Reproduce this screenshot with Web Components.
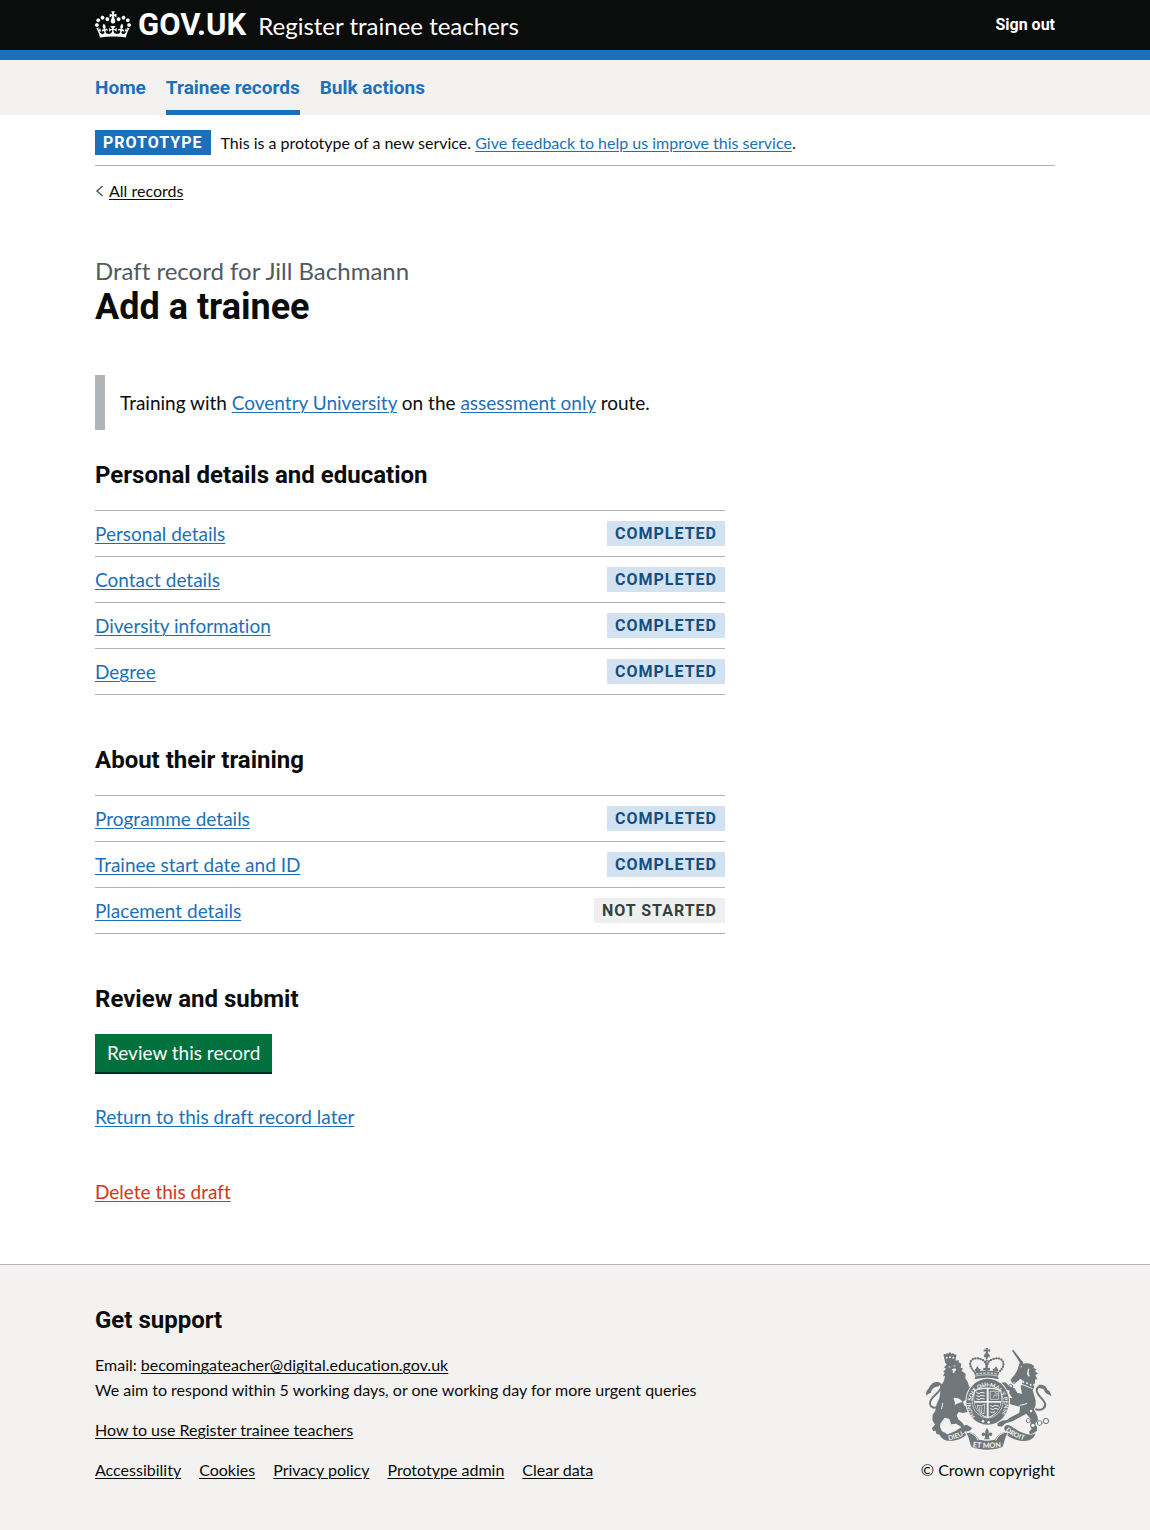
<!DOCTYPE html>
<html lang="en">
<head>
<meta charset="utf-8">
<meta name="viewport" content="width=device-width, initial-scale=1">
<title>Add a trainee - Register trainee teachers - GOV.UK</title>
<style>
  :root {
    --text: #0b0c0c;
    --link: #1d70b8;
    --muted: #505a5f;
    --line: #b1b4b6;
    --panel: #f3f2f1;
    --bold: Roboto, "Liberation Sans", sans-serif;
    --size-s: 16px;
    --size-m: 19px;
    --size-l: 24px;
    --size-xl: 36px;
  }
  html { background: var(--panel); }
  body {
    margin: 0;
    background: #fff;
    color: var(--text);
    font-family: Lato, "Liberation Sans", sans-serif;
    font-size: var(--size-m);
    font-variant-ligatures: none;
    line-height: 25px;
  }
</style>
</head>
<body>
<trainee-page></trainee-page>

<script>
const shared = `
  :host { display: block; }
  * { box-sizing: border-box; }
  a { color: var(--link); text-decoration: underline; text-decoration-thickness: 1px; text-underline-offset: 2px; }
  h1, h2, p, ul { margin: 0; padding: 0; }
  h1, h2 { font-family: var(--bold); }
  ul { list-style: none; }
  .container { max-width: 960px; margin: 0 auto; }
  @media (max-width: 1020px) { .container { margin: 0 30px; } }
`;

function component(name, render) {
  customElements.define(name, class extends HTMLElement {
    connectedCallback() {
      if (this.shadowRoot) return;
      const template = document.createElement('template');
      template.innerHTML = `<style>${shared}</style>` + render(this);
      this.attachShadow({ mode: 'open' }).append(template.content.cloneNode(true));
    }
  });
}

component('crown-icon', () => `
  <style>
    :host { flex: none; }
    svg { display: block; width: 36px; height: 27px; fill: currentColor; }
  </style>
  <svg viewBox="0 0 132 97" aria-hidden="true"><path d="M25 30.2c3.5 1.5 7.7-.2 9.1-3.7 1.5-3.6-.2-7.8-3.9-9.2-3.6-1.4-7.6.3-9.1 3.9-1.4 3.5.3 7.5 3.9 9zM9 39.5c3.6 1.5 7.8-.2 9.2-3.7 1.5-3.6-.2-7.8-3.9-9.1-3.6-1.5-7.6.2-9.1 3.8-1.4 3.5.3 7.5 3.8 9zM4.4 57.2c3.5 1.5 7.7-.2 9.1-3.8 1.5-3.6-.2-7.7-3.9-9.1-3.5-1.5-7.6.3-9.1 3.8-1.4 3.5.3 7.6 3.9 9.1zm38.3-21.4c3.5 1.5 7.7-.2 9.1-3.8 1.5-3.6-.2-7.7-3.9-9.1-3.6-1.5-7.6.3-9.1 3.8-1.3 3.6.4 7.7 3.9 9.1zm64.4-5.6c-3.6 1.5-7.8-.2-9.1-3.7-1.5-3.6.2-7.8 3.8-9.2 3.6-1.4 7.7.3 9.2 3.9 1.3 3.5-.4 7.5-3.9 9zm15.9 9.3c-3.6 1.5-7.7-.2-9.1-3.7-1.5-3.6.2-7.8 3.7-9.1 3.6-1.5 7.7.2 9.2 3.8 1.5 3.5-.3 7.5-3.8 9zm4.7 17.7c-3.6 1.5-7.8-.2-9.2-3.8-1.5-3.6.2-7.7 3.9-9.1 3.6-1.5 7.7.3 9.2 3.8 1.3 3.5-.4 7.6-3.9 9.1zM89.3 35.8c-3.6 1.5-7.8-.2-9.2-3.8-1.4-3.6.2-7.7 3.9-9.1 3.6-1.5 7.7.3 9.2 3.8 1.4 3.6-.3 7.7-3.9 9.1zM69.7 17.7l8.9 4.7V9.3l-8.9 2.8c-.2-.3-.5-.6-.9-.9L72.4 0H59.6l3.5 11.2c-.3.3-.6.5-.9.9l-8.8-2.8v13.1l8.8-4.7c.3.3.6.7.9.9l-5 15.4v.1c-.2.8-.4 1.6-.4 2.4 0 4.1 3.1 7.5 7 8.1h.2c.3 0 .7.1 1 .1.4 0 .7 0 1-.1h.2c4-.6 7.1-4.1 7.1-8.1 0-.8-.1-1.7-.4-2.4V34l-5.1-15.4c.4-.2.7-.6 1-.9zM66 92.8c16.9 0 32.8 1.1 47.1 3.2 4-16.9 8.9-26.7 14-33.5l-9.6-3.4c1 4.9 1.1 7.2 0 10.2-1.5-1.4-3-4.3-4.2-8.7L108.6 76c2.8-2 5-3.2 7.5-3.3-4.4 9.4-10 11.9-13.6 11.2-4.3-.8-6.3-4.6-5.6-7.9 1-4.7 5.7-5.9 8-.5 4.3-8.7-3-11.4-7.6-8.8 7.1-7.2 7.9-13.5 2.1-21.1-8 6.1-8.1 12.3-4.5 20.8-4.7-5.4-12.1-2.5-9.5 6.2 3.4-5.2 7.9-2 7.2 3.1-.6 4.3-6.4 7.8-13.5 7.2-10.3-.9-10.9-8-11.2-13.8 2.5-.5 7.1 1.8 11 7.3L80.2 60c-4.1 4.4-8 5.3-12.3 5.4 1.4-4.4 8-11.6 8-11.6H55.5s6.4 7.2 7.9 11.6c-4.2-.1-8-1-12.3-5.4l1.4 16.4c3.9-5.5 8.5-7.7 10.9-7.3-.3 5.8-.9 12.8-11.1 13.8-7.2.6-12.9-2.9-13.5-7.2-.7-5 3.8-8.3 7.1-3.1 2.7-8.7-4.6-11.6-9.4-6.2 3.7-8.5 3.6-14.7-4.6-20.8-5.8 7.6-5 13.9 2.2 21.1-4.7-2.6-11.9.1-7.7 8.8 2.3-5.5 7.1-4.2 8.1.5.7 3.3-1.3 7.1-5.7 7.9-3.5.7-9-1.8-13.5-11.2 2.5.1 4.7 1.3 7.5 3.3l-4.7-15.4c-1.2 4.4-2.7 7.2-4.3 8.7-1.1-3-.9-5.3 0-10.2l-9.5 3.4c5 6.9 9.9 16.7 14 33.5 14.8-2.1 30.8-3.2 47.7-3.2z"/></svg>
`);

component('royal-arms', () => `
  <style>
    svg { display: block; width: 126px; height: 102px; }
    .ink { fill: #6f777b; }
    .paper { fill: #f3f2f1; }
    .ink-line { fill: none; stroke: #6f777b; stroke-linecap: round; stroke-linejoin: round; }
    .paper-line { fill: none; stroke: #f3f2f1; stroke-linecap: round; stroke-linejoin: round; }
    text { fill: #f3f2f1; font-family: Lato, "Liberation Sans", sans-serif; font-weight: 700; }
  </style>
  <svg viewBox="36 24 378 306" aria-hidden="true">
    <!-- lion -->
    <path class="ink" d="M93 66l5 8-8 8 6 4-9 10 5 1-5 12 6-1-3 14-8 14-3 20-3 18-8 18-4 20-8 12-1 16 8 14-9 10 3 9 8-1 2 9 11 3 4 6 18-3-5-8-11-5-6-14 2-11 12-16 14 4 6 16 14-2 16 10-4 12 3 6 12-6 14-1 8-8-10-5-12 1-8-12-12-10-5-12 6-10 12 3 18-4 3-12-16-6-4-12 8-6 14 2 2-12-12-6 12-4 2-10-8-10-4-14-7-10 1-14-12-8 4-8-7-2 2-12-8-4 1-6z"/>
    <path class="ink" d="M92 60l-3-13c-2-5 4-7 6-3 0-5 6-6 8-2 1-5 8-5 9 0 3-4 8-2 8 2 4-3 9 0 7 5l-3 11z"/>
    <path class="ink" d="M106 37h3v3h-3zM92 60l33-2 0 7-32 3z"/>
    <g class="paper"><circle cx="98" cy="53" r="3"/><circle cx="108" cy="52" r="3"/><circle cx="118" cy="53" r="3"/><path d="M103 78l6 2 1 3-5-1zM119 77l6-1-1 3-5 1zM113 88l11-3 3 4-4 5-3 6-5-3 2-5z"/></g>
    <path class="paper" d="M118 174c10-2 20 2 28 12-10 2-18 4-24 10 2-8 0-14-4-22z"/>
    <path class="paper-line" stroke-width="3" d="M86 190l-3 16"/>
    <path class="ink-line" stroke-width="6" d="M80 194c-22 20-40 2-28-16 10-16 28-22 30-38 0-10-12-14-24-8"/>
    <path class="ink" d="M76 127c-14-1-28 6-31 18-8 6-10 15-8 22 6-6 8-7 14-8 1-12 9-18 25-20z"/>
    <!-- unicorn -->
    <path class="ink" d="M294 32l4-3 30 39-7 5z"/>
    <path class="ink" d="M318 66l8-2 2 7c12-4 26 0 33 8l-3 5 10 4-5 5 9 8-8 4 6 12-7 2 0 11-6 4 4 8-5 8 4 14 5 18 0 12-5 14 10 20 2 12-9 12 6 8 0 12-11 8-10 3-3-8 8-8-4-10 2-18-14-18-18 10-22 12-22 7-12 10-12-2-1-9 12-7 16-2 12-8 26-14 2-18-18-4-22-6-4-10 6-7 16 2-10-14 0-10-10 0-10-10-10 4-8-6 10-10 16-2 12 12 16 6 8 14 14 2-4-20 7-18-6-6-16 10-11 0-5-7 13-16 8-14z"/>
    <g class="paper"><circle cx="322" cy="80" r="2"/><path d="M342 86l-3 16 5 8 3-2-3-8 2-14z"/><circle cx="318" cy="121" r="3"/><circle cx="328" cy="126" r="3"/><circle cx="339" cy="130" r="3"/><circle cx="350" cy="134" r="3"/></g>
    <path class="paper-line" stroke-width="3" d="M310 128l44 17M318 196l20-5"/>
    <g class="ink-line" stroke-width="3"><circle cx="300" cy="124" r="6"/><circle cx="290" cy="139" r="6"/></g>
    <path class="ink-line" stroke-width="6" d="M366 208c20 6 32-8 26-20-8-16-24-22-24-38 2-11 15-14 24-7"/>
    <path class="ink" d="M374 134c14-1 24 5 26 15 8 3 10 10 12 20-8-7-14-5-19-12-1-8-6-12-18-13z"/>
    <g class="ink-line" stroke-width="3"><circle cx="343" cy="242" r="6"/><circle cx="357" cy="256" r="7"/><circle cx="377" cy="249" r="7"/><circle cx="396" cy="243" r="8"/></g>
    <g class="paper"><circle cx="343" cy="242" r="4"/><circle cx="357" cy="256" r="5"/><circle cx="377" cy="249" r="5"/><circle cx="351" cy="213" r="4"/></g>
    <!-- crown -->
    <path class="ink" d="M215 24h7l-1 5 7-1v7l-7-1 2 7 5 5-2 6h-15l-2-6 5-5 2-7-7 1v-7l7 1z"/>
    <g class="ink-line">
      <path stroke-width="3" d="M184 98c-30-26-12-52 18-40 12 5 14 12 16 22 2-10 5-17 17-22 30-12 48 14 18 40"/>
      <path stroke-width="7" stroke-dasharray="0 8" d="M184 98c-30-26-12-52 18-40 12 5 14 12 16 22 2-10 5-17 17-22 30-12 48 14 18 40"/>
      <path stroke-width="7" stroke-dasharray="0 8" d="M218 54v24"/>
    </g>
    <path class="ink" d="M214 78h8l-1 6 7-1v8l-7-1 1 8h-8l1-8-7 1v-8l7 1zM190 78l5 8 6 2-4 6-10 2-5-5 4-6zM246 78l-5 8-6 2 4 6 10 2 5-5-4-6zM180 96c25-6 51-6 76 0l-4 13 2 9c-24-6-48-6-72 0l2-9z"/>
    <path class="paper-line" stroke-width="2" d="M185 108c22-5 44-5 66 0"/>
    <path class="paper-line" stroke-width="3" stroke-dasharray="5 6" d="M187 102c20-4 42-4 62 0"/>
    <!-- garter and shield -->
    <ellipse class="paper" cx="221" cy="185" rx="67" ry="72"/>
    <ellipse class="ink" cx="221" cy="185" rx="64" ry="69"/>
    <ellipse class="paper-line" stroke-width="2" cx="221" cy="184" rx="46" ry="50"/>
    <path class="paper" d="M180 150c26-10 56-10 82 0 6 42-6 74-41 84-35-10-47-42-41-84z"/>
    <path class="ink" d="M183 153c10-4 22-6 35-6v36h-37c-1-10 0-20 2-30zM224 147c13 0 25 2 35 6 2 10 3 20 2 30h-37zM224 188h36c-3 20-15 35-36 42zM182 188h36v42c-21-7-33-22-36-42z"/>
    <g class="paper-line" stroke-width="3">
      <path d="M188 158l7 3 6-4 10 2M188 167l7 3 6-4 10 2M188 176l7 3 6-4 10 2M230 197l7 3 6-4 10 2M230 206l7 3 6-4 8 2M230 216l6 2 6-3"/>
      <path stroke-width="2" d="M230 154h24v24h-24zM238 172l4-8 6 5 2-8-7-3"/>
      <path stroke-width="2" d="M190 196c0 14 8 22 20 26l2-30c-6 6-14 6-22 4M197 200v14M203 200v18"/>
    </g>
    <path id="garter" fill="none" d="M184 230A50 54 0 1 1 258 230"/>
    <text font-size="17"><textPath href="#garter">HONI SOIT QUI MAL Y PENSE</textPath></text>
    <g class="paper"><circle cx="207" cy="244" r="4"/><circle cx="224" cy="247" r="4"/></g>
    <!-- motto scroll -->
    <path class="ink" d="M75 280c18 12 50-6 68-19 12-8 22-8 24 2 1 9-8 12-15 11l4 12c-18 14-42 21-62 15-10-4-16-12-19-21z"/>
    <path class="ink" d="M365 280c-18 12-52-6-70-19-12-8-22-8-24 2-1 9 6 12 13 11l-4 12c18 14 46 21 66 15 10-4 16-12 19-21z"/>
    <path class="ink" d="M155 277c14-6 32 8 40 22 8 3 40 3 48 0 8-14 26-28 40-22-10 10-10 28-18 44-28 11-62 11-92 0-8-16-8-34-18-44z"/>
    <path class="paper-line" stroke-width="3" d="M146 282c16-14 40 2 46 18M292 282c-16-14-40 2-46 18"/>
    <path class="paper" d="M196 260h46l4 20-12 20c-10 2-20 2-30 0l-12-20z"/>
    <path class="ink" d="M219 264c6 8 7 14 3 20 4-8 12-8 13-1 0 6-6 6-9 3l-2 6 4 6h-18l4-6-2-6c-3 3-9 3-9-3 1-7 9-7 13 1-4-6-3-12 3-20z"/>
    <path id="motto-left" fill="none" d="M104 301q32-5 62-26"/>
    <path id="motto-mid" fill="none" d="M176 321q42 7 104-1"/>
    <path id="motto-right" fill="none" d="M274 273q28 22 72 32"/>
    <text font-size="20" font-weight="900"><textPath href="#motto-left">DIEU</textPath></text>
    <text font-size="22" font-weight="900"><textPath href="#motto-mid">ET MON</textPath></text>
    <text font-size="20" font-weight="900"><textPath href="#motto-right">DROIT</textPath></text>
  </svg>
`);

component('site-header', () => `
  <style>
    header { background: #0b0c0c; border-bottom: 10px solid var(--link); color: #fff; }
    .container { display: flex; align-items: center; justify-content: space-between; padding: 10px 0; }
    a { color: #fff; text-decoration: none; }
    .brand { display: flex; align-items: center; gap: 12px; }
    .logo { display: flex; align-items: center; gap: 7px; font-family: var(--bold); font-size: 31px; line-height: 30px; font-weight: 700; }
    crown-icon { margin-bottom: 2px; }
    .service { font-size: var(--size-l); line-height: 26px; padding-top: 2px; }
    .out { font-family: var(--bold); font-size: var(--size-s); line-height: 20px; font-weight: 700; }
  </style>
  <header><div class="container">
    <div class="brand">
      <a class="logo" href="#"><crown-icon></crown-icon><span>GOV.UK</span></a>
      <a class="service" href="#"><slot></slot></a>
    </div>
    <a class="out" href="#">Sign out</a>
  </div></header>
`);

component('primary-nav', () => `
  <style>
    nav { background: var(--panel); }
    .container { display: flex; gap: 20px; }
  </style>
  <nav aria-label="Primary"><div class="container"><slot></slot></div></nav>
`);

component('nav-item', el => `
  <style>
    a { display: block; padding: 15px 0 10px; border-bottom: 5px solid transparent; font-family: var(--bold); font-weight: 700; text-decoration: none; }
    a[aria-current] { border-color: var(--link); }
  </style>
  <a href="#" ${el.hasAttribute('current') ? 'aria-current="page"' : ''}><slot></slot></a>
`);

component('status-tag', el => {
  const colours = {
    phase: ['#1d70b8', '#fff'],
    completed: ['#d2e2f1', '#144e81'],
    pending: ['#eeefef', '#383f43'],
  }[el.getAttribute('kind')];
  return `
  <style>
    :host { flex: none; }
    strong {
      display: block; padding: 3px 8px 2px; background: ${colours[0]}; color: ${colours[1]}; font-family: var(--bold);
      font-size: var(--size-s); line-height: 20px; font-weight: 700; letter-spacing: 1px; text-transform: uppercase;
    }
  </style>
  <strong><slot></slot></strong>`;
});

component('phase-banner', () => `
  <style>
    .row { display: flex; align-items: center; gap: 10px; padding: 15px 0 10px; border-bottom: 1px solid var(--line); font-size: var(--size-s); line-height: 20px; }
  </style>
  <div class="container"><div class="row">
    <status-tag kind="phase">Prototype</status-tag>
    <p>This is a prototype of a new service. <a href="#">Give feedback to help us improve this service</a>.</p>
  </div></div>
`);

component('back-link', () => `
  <style>
    :host { margin-top: 15px; }
    a { display: flex; width: fit-content; align-items: center; gap: 5px; color: var(--text); font-size: var(--size-s); line-height: 20px; text-decoration: none; }
    span { text-decoration: underline; text-decoration-thickness: 1px; text-underline-offset: 2px; }
    svg { width: 9px; height: 12px; fill: none; stroke: var(--muted); stroke-width: 1.5; }
  </style>
  <a href="#"><svg viewBox="0 0 9 12" aria-hidden="true"><path d="M7.500 1L2 6l5.500 5"/></svg><span><slot></slot></span></a>
`);

component('page-title', el => `
  <style>
    :host { margin-top: 55px; }
    h1 { font-size: var(--size-xl); line-height: 42px; font-weight: 700; }
    .caption { display: block; color: var(--muted); font-family: Lato, "Liberation Sans", sans-serif; font-size: var(--size-l); line-height: 30px; font-weight: 400; }
  </style>
  <h1><span class="caption">${el.getAttribute('caption')}</span><slot></slot></h1>
`);

component('inset-text', () => `
  <style>
    :host { margin: 47px 0 30px; padding: 15px; border-left: 10px solid var(--line); }
  </style>
  <p>Training with <a href="#">Coventry University</a> on the <a href="#">assessment only</a> route.</p>
`);

component('page-section', el => `
  <style>
    :host { margin-bottom: 50px; }
    h2 { margin-bottom: 20px; font-size: var(--size-l); line-height: 30px; font-weight: 700; }
  </style>
  <section><h2>${el.getAttribute('heading')}</h2><slot></slot></section>
`);

component('task-list', () => `
  <style>div { border-top: 1px solid var(--line); }</style>
  <div role="list"><slot></slot></div>
`);

component('task-item', el => `
  <style>
    div { display: flex; align-items: center; justify-content: space-between; gap: 10px; padding: 10px 0; border-bottom: 1px solid var(--line); }
  </style>
  <div role="listitem">
    <a href="#"><slot></slot></a>
    ${el.hasAttribute('pending')
      ? '<status-tag kind="pending">Not started</status-tag>'
      : '<status-tag kind="completed">Completed</status-tag>'}
  </div>
`);

component('action-button', () => `
  <style>
    :host { padding-bottom: 2px; }
    button {
      display: block; margin: 0; padding: 6px 12px 7px; border: 0; background: #00703c; color: #fff;
      box-shadow: 0 2px 0 #002d18; font: inherit; line-height: 25px; cursor: pointer;
    }
  </style>
  <button type="button"><slot></slot></button>
`);

component('draft-links', () => `
  <style>
    :host { margin-top: 30px; }
    p + p { margin-top: 50px; }
    .delete { color: #d4351c; }
  </style>
  <p><a href="#">Return to this draft record later</a></p>
  <p><a class="delete" href="#">Delete this draft</a></p>
`);

component('site-footer', () => `
  <style>
    footer { padding: 40px 0 50px; border-top: 1px solid var(--line); background: var(--panel); font-size: var(--size-s); line-height: 20px; }
    .container { display: flex; align-items: flex-end; justify-content: space-between; gap: 30px; }
    h2 { margin-bottom: 20px; font-size: var(--size-l); line-height: 30px; font-weight: 700; }
    a { color: var(--text); }
    .email { margin-bottom: 5px; }
    .help { margin: 20px 0; }
    ul { display: flex; flex-wrap: wrap; gap: 5px 18px; }
    .crown { display: flex; flex-direction: column; align-items: flex-end; gap: 10px; white-space: nowrap; }
    royal-arms { margin-right: 3px; }
  </style>
  <footer><div class="container">
    <div>
      <h2>Get support</h2>
      <p class="email">Email: <a href="#">becomingateacher@digital.education.gov.uk</a></p>
      <p>We aim to respond within 5 working days, or one working day for more urgent queries</p>
      <p class="help"><a href="#">How to use Register trainee teachers</a></p>
      <ul>
        <li><a href="#">Accessibility</a></li>
        <li><a href="#">Cookies</a></li>
        <li><a href="#">Privacy policy</a></li>
        <li><a href="#">Prototype admin</a></li>
        <li><a href="#">Clear data</a></li>
      </ul>
    </div>
    <div class="crown"><royal-arms></royal-arms><span>© Crown copyright</span></div>
  </div></footer>
`);

component('trainee-page', () => `
  <style>
    main { max-width: 630px; padding-bottom: 10px; }
  </style>
  <site-header>Register trainee teachers</site-header>
  <primary-nav>
    <nav-item>Home</nav-item>
    <nav-item current>Trainee records</nav-item>
    <nav-item>Bulk actions</nav-item>
  </primary-nav>
  <phase-banner></phase-banner>
  <div class="container">
    <back-link>All records</back-link>
    <main>
      <page-title caption="Draft record for Jill Bachmann">Add a trainee</page-title>
      <inset-text></inset-text>
      <page-section heading="Personal details and education">
        <task-list>
          <task-item>Personal details</task-item>
          <task-item>Contact details</task-item>
          <task-item>Diversity information</task-item>
          <task-item>Degree</task-item>
        </task-list>
      </page-section>
      <page-section heading="About their training">
        <task-list>
          <task-item>Programme details</task-item>
          <task-item>Trainee start date and ID</task-item>
          <task-item pending>Placement details</task-item>
        </task-list>
      </page-section>
      <page-section heading="Review and submit">
        <action-button>Review this record</action-button>
        <draft-links></draft-links>
      </page-section>
    </main>
  </div>
  <site-footer></site-footer>
`);
</script>
</body>
</html>
